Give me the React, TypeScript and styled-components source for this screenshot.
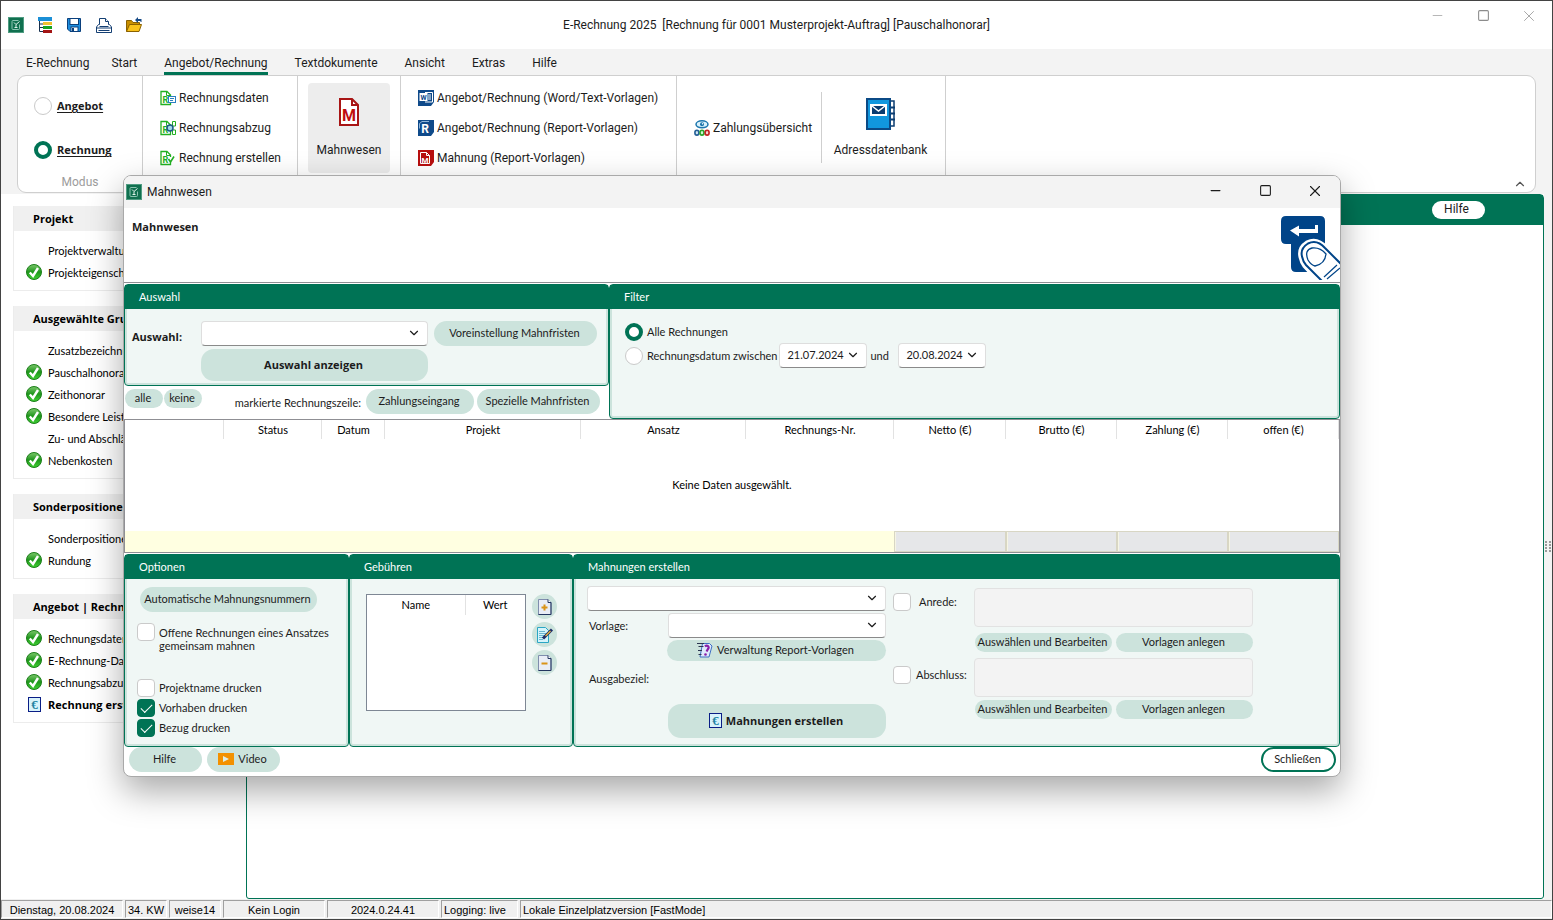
import React from "react";
import styled, { createGlobalStyle } from "styled-components";
import { ChevronDown, ChevronUp, Minus, Square, X } from "lucide-react";

const green = "#007355";
const mint = "#cce3dc";
const uiFont = 'Roboto, "Open Sans", sans-serif';
const strongFont = '"Open Sans", "Noto Sans", sans-serif';
const formFont = 'Lato, "Open Sans", sans-serif';

const GlobalStyle = createGlobalStyle`
  * { box-sizing: border-box; }
  body { margin: 0; background: #fff; }
  button, input, select, textarea { font: inherit; color: inherit; margin: 0; }
  h1, h2, h3, p { margin: 0; font: inherit; }
  svg { display: block; flex: none; }
`;

/* ---------- application frame ---------- */

const AppWindow = styled.div`
  position: relative;
  display: flex;
  flex-direction: column;
  min-height: 100vh;
  border: 1px solid #434343;
  background: #fff;
  color: #1c1c1c;
  font-family: ${uiFont};
  font-size: 12px;
  line-height: 16px;
  overflow: hidden;
`;

const TitleBar = styled.header`
  display: grid;
  grid-template-columns: 1fr auto 1fr;
  align-items: center;
  height: 48px;
  flex: none;
`;

const QuickAccess = styled.div`
  display: flex;
  gap: 14px;
  padding-left: 7px;
`;

const ToolButton = styled.button`
  display: flex;
  padding: 0;
  border: 0;
  background: none;
`;

const WindowButtons = styled.div<{ $muted?: boolean }>`
  display: flex;
  justify-content: flex-end;
  align-self: start;
  color: ${(p) => (p.$muted ? "#8c8c8c" : "#1c1c1c")};
`;

const WindowButton = styled.button<{ $width: number }>`
  display: flex;
  align-items: center;
  justify-content: center;
  width: ${(p) => p.$width}px;
  height: 29px;
  padding: 0;
  border: 0;
  background: none;
`;

const RibbonArea = styled.div`
  flex: none;
  padding: 0 16px 1px;
  background: #f3f3f3;
`;

const TabBar = styled.nav`
  display: flex;
  height: 26px;
  padding-left: 9px;
`;

const Tab = styled.button<{ $active?: boolean; $wide?: boolean }>`
  height: 26px;
  margin: 0 ${(p) => (p.$wide ? 22 : 27)}px 0 0;
  padding: 4px 0 0;
  border: 0;
  border-bottom: 3px solid ${(p) => (p.$active ? green : "transparent")};
  background: none;
  text-align: left;
`;

const Ribbon = styled.div`
  position: relative;
  display: flex;
  height: 118px;
  border: 1px solid #cfcfcf;
  border-radius: 9px;
  background: #fff;
`;

const RibbonGroup = styled.section<{ $width: number }>`
  display: flex;
  flex-direction: column;
  width: ${(p) => p.$width}px;
  border-right: 1px solid #cfcfcf;
`;

const ModeGroup = styled(RibbonGroup)`
  justify-content: space-between;
  padding-bottom: 2px;
`;

const ModeList = styled.div`
  display: flex;
  flex-direction: column;
  gap: 26px;
  padding: 21px 0 0 16px;
`;

const ModeCaption = styled.p`
  color: #9c9c9c;
  text-align: center;
`;

const ListGroup = styled(RibbonGroup)`
  padding: 7px 0 0 17px;
`;

const RibbonItem = styled.button`
  display: flex;
  align-items: center;
  gap: 3px;
  height: 30px;
  padding: 0;
  border: 0;
  background: none;
  white-space: nowrap;
`;

const TileGroup = styled(RibbonGroup)<{ $end?: number }>`
  padding: 7px ${(p) => p.$end ?? 10}px 0 10px;
`;

const Tile = styled.button<{ $selected?: boolean }>`
  display: flex;
  flex-direction: column;
  align-items: center;
  justify-content: space-between;
  height: 90px;
  padding: 14px 0 15px;
  border: 0;
  border-radius: 4px;
  background: ${(p) => (p.$selected ? "#ededed" : "none")};
`;

const OverviewGroup = styled(RibbonGroup)`
  flex-direction: row;
  padding: 16px 0 29px 17px;
  border: 0;
`;

const OverviewSlot = styled.div`
  display: flex;
  align-items: center;
  flex: 1;
  border-right: 1px solid #cfcfcf;
`;

const CollapseButton = styled.button`
  align-self: flex-end;
  display: flex;
  margin: 0 8px 1px auto;
  padding: 0;
  border: 0;
  background: none;
  color: #555;
`;

/* ---------- choice controls ---------- */

const Radio = styled.input.attrs({ type: "radio" })`
  appearance: none;
  flex: none;
  width: 18px;
  height: 18px;
  border: 1px solid #cacaca;
  border-radius: 50%;
  background: #fff;
  &:checked {
    border: 4px solid ${green};
  }
`;

const Check = styled.input.attrs({ type: "checkbox" })`
  appearance: none;
  flex: none;
  display: grid;
  place-items: center;
  width: 18px;
  height: 18px;
  border: 1px solid #cacaca;
  border-radius: 4px;
  background: #fff;
  &:checked {
    border-color: ${green};
    background: ${green};
  }
  &:checked::after {
    content: "";
    width: 10px;
    height: 5px;
    margin-top: -3px;
    border: solid #fff;
    border-width: 0 0 1px 1px;
    transform: rotate(-45deg);
  }
`;

const Choice = styled.label<{ $gap?: number; $top?: boolean }>`
  display: flex;
  align-items: ${(p) => (p.$top ? "flex-start" : "center")};
  gap: ${(p) => p.$gap ?? 4}px;
  white-space: nowrap;
`;

const ModeLabel = styled.span`
  font: 700 11px/16px ${strongFont};
  text-decoration: underline;
  text-underline-offset: 2px;
`;

/* ---------- body: sidebar and document area ---------- */

const Body = styled.main`
  display: flex;
  flex: 1;
`;

const Sidebar = styled.aside`
  display: flex;
  flex-direction: column;
  gap: 15px;
  flex: none;
  width: 245px;
  padding: 12px 12px 0;
  font-family: ${formFont};
  font-size: 11px;
  color: #000;
`;

const SideGroup = styled.section`
  padding-bottom: 6px;
  border: 1px solid #ececec;
  border-top: 0;
`;

const SideTitle = styled.h2`
  height: 25px;
  margin-bottom: 9px;
  padding: 5px 0 0 19px;
  background: #f0f0f0;
  font: 700 11px/16px ${strongFont};
`;

const SideItem = styled.a<{ $strong?: boolean }>`
  display: flex;
  align-items: center;
  gap: 6px;
  height: 22px;
  padding-left: 12px;
  color: inherit;
  text-decoration: none;
  white-space: nowrap;
  font-family: ${(p) => (p.$strong ? strongFont : "inherit")};
  font-weight: ${(p) => (p.$strong ? 700 : 400)};
`;

const IconSlot = styled.span`
  display: flex;
  justify-content: center;
  width: 16px;
  padding-bottom: 2px;
`;

const DocumentArea = styled.section`
  flex: 1;
  border: 1px solid ${green};
  border-radius: 4px 4px 3px 3px;
`;

const DocumentHeader = styled.div`
  display: flex;
  align-items: flex-start;
  justify-content: flex-end;
  height: 30px;
  padding: 6px 58px 0 0;
  background: ${green};
`;

const WhiteButton = styled.button`
  width: 53px;
  height: 18px;
  padding: 0 4px 2px 0;
  border: 0;
  border-radius: 9px;
  background: #fff;
  font-size: 12px;
  line-height: 16px;
`;

const RightRail = styled.div`
  display: flex;
  align-items: center;
  justify-content: center;
  width: 8px;
  background: #f3f3f3;
`;

const StatusBar = styled.footer`
  display: flex;
  gap: 2px;
  flex: none;
  height: 20px;
  padding: 1px 0;
  background: #f0f0f0;
  color: #000;
  font: 11px/18px "Liberation Sans", Arial, sans-serif;
`;

const StatusCell = styled.span<{ $width?: number; $left?: boolean }>`
  flex: ${(p) => (p.$width ? "none" : 1)};
  width: ${(p) => (p.$width ? p.$width + "px" : "auto")};
  padding: 0 2px;
  border: 1px solid;
  border-color: #a0a0a0 #fff #fff #a0a0a0;
  text-align: ${(p) => (p.$left ? "left" : "center")};
  white-space: nowrap;
`;

/* ---------- dialog ---------- */

const Dialog = styled.section`
  position: absolute;
  left: 122px;
  right: 211px;
  top: 174px;
  border: 1px solid #a9a9a9;
  border-radius: 8px;
  background: #fff;
  box-shadow: 0 14px 34px rgba(0, 0, 0, 0.34);
  overflow: hidden;
  font-family: ${formFont};
  font-size: 11px;
`;

const DialogBar = styled.header`
  display: flex;
  align-items: center;
  height: 32px;
  padding-left: 2px;
  background: #f3f3f3;
  font: 12px/16px ${uiFont};
`;

const DialogTitle = styled.h1`
  flex: 1;
  padding: 0 0 1px 5px;
`;

const DialogHead = styled.div`
  display: flex;
  justify-content: space-between;
  height: 75px;
  margin-bottom: 1px;
  padding: 8px 0 0 8px;
  border-bottom: 1px solid #8f8f94;
`;

const Strong = styled.strong`
  font: 700 11px/16px ${strongFont};
`;

const HeadTitle = styled(Strong)`
  padding-top: 3px;
`;

const UpperRow = styled.div`
  display: grid;
  grid-template-columns: 485px 1fr;
  height: 135px;
`;

const LowerRow = styled.div`
  display: grid;
  grid-template-columns: 225px 224px 1fr;
  height: 193px;
  margin-top: 1px;
`;

const Stack = styled.div`
  display: flex;
  flex-direction: column;
`;

const PanelBox = styled.section`
  display: flex;
  flex-direction: column;
  flex: 1;
  min-width: 0;
  border: 1px solid ${green};
  border-radius: 4px;
  background: #f0f7f5;
  box-shadow: inset 0 0 0 2px ${mint};
`;

const PanelTitle = styled.h2`
  flex: none;
  height: 24px;
  padding: 4px 0 0 14px;
  background: ${green};
  color: #fff;
  line-height: 16px;
`;

const Pill = styled.button<{ $width: number; $height?: number }>`
  display: flex;
  align-items: center;
  justify-content: center;
  gap: 4px;
  flex: none;
  width: ${(p) => p.$width}px;
  height: ${(p) => p.$height ?? 25}px;
  padding: 0 2px 1px 0;
  border: 0;
  border-radius: 13px;
  background: ${mint};
  line-height: 16px;
  white-space: nowrap;
`;

const OutlinePill = styled(Pill)`
  margin-left: auto;
  border: 2px solid ${green};
  background: #fff;
`;

const SelectWrap = styled.span<{ $width: number }>`
  position: relative;
  display: block;
  flex: none;
  width: ${(p) => p.$width}px;
  height: 25px;
  svg {
    position: absolute;
    right: 7px;
    top: 5px;
    pointer-events: none;
  }
`;

const SelectBox = styled.select`
  appearance: none;
  width: 100%;
  height: 100%;
  padding: 0 7px 1px;
  border: 1px solid #dedede;
  border-bottom-color: #8a8a8a;
  border-radius: 4px;
  background: #fff;
`;

function DropDown({ label, width, value = "" }: { label: string; width: number; value?: string }) {
  return (
    <SelectWrap $width={width}>
      <SelectBox aria-label={label} defaultValue={value}>
        <option value={value}>{value}</option>
      </SelectBox>
      <ChevronDown size={14} strokeWidth={2} />
    </SelectWrap>
  );
}

const ChoiceForm = styled.div`
  display: grid;
  grid-template-columns: 63px 227px 163px;
  gap: 3px 6px;
  flex: 1;
  padding: 12px 0 4px 7px;
  align-items: start;
`;

const ChoiceCaption = styled(Strong)`
  padding-top: 8px;
`;

const SecondRow = styled.div`
  grid-column: 2;
`;

const MarkRow = styled.div`
  display: flex;
  align-items: flex-start;
  gap: 1px;
  height: 33px;
  padding: 3px 0 0 1px;
`;

const MarkCaption = styled.span`
  flex: 1;
  padding: 6px 4px 0 0;
  text-align: right;
  white-space: nowrap;
`;

const MarkActions = styled.div`
  display: flex;
  gap: 3px;
  padding-right: 9px;
`;

const FilterForm = styled.div`
  display: flex;
  flex-direction: column;
  align-items: flex-start;
  gap: 2px;
  padding: 14px 0 0 15px;
`;

const FilterRow = styled.div`
  display: flex;
  align-items: center;
  gap: 2px;
`;

const AndWord = styled.span`
  width: 27px;
  padding-left: 1px;
`;

const InvoiceTable = styled.table`
  width: 100%;
  table-layout: fixed;
  border-collapse: separate;
  border-spacing: 0;
  border: 1px solid #8f8f94;
  color: #000;
  th,
  td {
    padding: 0;
    font-weight: 400;
    text-align: center;
  }
  thead th {
    height: 21px;
    padding-bottom: 1px;
    background: linear-gradient(#e2e2e2, #e2e2e2) right top / 1px 19px no-repeat;
  }
  tbody td {
    height: 90px;
    padding-bottom: 2px;
  }
  tfoot td {
    height: 21px;
    background: #ffffe1;
  }
`;

const SumCell = styled.td`
  && {
    background: #e6e7e9;
    border: 1px solid #d8d6c4;
    box-shadow: inset 1px 0 #f6f5e4;
  }
`;

const OptionForm = styled.div`
  display: flex;
  flex-direction: column;
  align-items: flex-start;
  gap: 2px;
  padding: 8px 0 0 12px;
`;

const OptionTop = styled.div`
  padding: 0 0 9px 3px;
`;

const TwoLine = styled.span`
  padding-top: 3px;
  line-height: 13px;
  white-space: pre-line;
`;

const OptionBreak = styled.div`
  height: 23px;
`;

const FeeForm = styled.div`
  display: flex;
  gap: 6px;
  padding: 15px 0 0 16px;
`;

const FeeBox = styled.div`
  width: 160px;
  height: 117px;
  border: 1px solid #7e8794;
  background: #fff;
`;

const FeeTable = styled.table`
  width: 100%;
  border-collapse: collapse;
  color: #000;
  th {
    height: 20px;
    padding: 0;
    font-weight: 400;
  }
  th:first-child {
    width: 98px;
    border-right: 1px solid #e2e2e2;
  }
`;

const RoundButtons = styled.div`
  display: flex;
  flex-direction: column;
  gap: 3px;
`;

const RoundButton = styled.button`
  display: grid;
  place-items: center;
  width: 25px;
  height: 25px;
  padding: 0;
  border: 0;
  border-radius: 50%;
  background: ${mint};
`;

const DunningForm = styled.div`
  display: flex;
  gap: 7px;
  padding: 7px 0 0 13px;
`;

const DunningLeft = styled.div`
  display: flex;
  flex-direction: column;
  gap: 2px;
  width: 299px;
`;

const FieldRow = styled.div`
  display: flex;
  align-items: center;
  justify-content: space-between;
  height: 25px;
  padding-left: 2px;
`;

const TargetRow = styled(FieldRow)`
  height: 39px;
  padding-bottom: 8px;
`;

const RightAligned = styled.div`
  display: flex;
  justify-content: flex-end;
`;

const DunningRight = styled.div`
  display: grid;
  grid-template-columns: 74px 279px;
  column-gap: 7px;
  align-content: start;
  align-items: start;
  padding-top: 2px;
`;

const BlockChoice = styled(Choice)<{ $down: number }>`
  padding-top: ${(p) => p.$down}px;
`;

const TextBox = styled.textarea`
  display: block;
  width: 100%;
  height: 39px;
  border: 1px solid #e2e2e2;
  border-radius: 4px;
  background: #f3f3f3;
  resize: none;
`;

const ButtonPair = styled.div<{ $top: number; $bottom: number }>`
  grid-column: 2;
  display: flex;
  justify-content: space-between;
  padding: ${(p) => p.$top}px 0 ${(p) => p.$bottom}px 1px;
`;

const DialogFooter = styled.footer`
  display: flex;
  gap: 5px;
  height: 29px;
  padding: 0 4px 0 5px;
`;

/* ---------- icons ---------- */

const AppIcon = () => (
  <svg width="16" height="16" viewBox="0 0 16 16">
    <rect width="16" height="16" fill="#10704f" />
    <rect x="0.5" y="0.5" width="15" height="15" fill="none" stroke="#4f9c82" />
    <path d="M10.500 3.500H5q-1 0-1 1v7q0 1 1 1h5.500q1 0 1-1V7.500" fill="none" stroke="#8cc4b1" />
    <path d="M6 5.500l2 2 3.500-3M8 7.500v3M6.500 10.500h3" fill="none" stroke="#dff2ea" />
  </svg>
);

const TreeIcon = () => (
  <svg width="14" height="16" viewBox="1 0 14 16">
    <rect x="1" width="14" height="4" fill="#1b8fd6" />
    <path d="M2.500 4v10.500H6M2.500 7H6M2.500 10.500H6" fill="none" stroke="#16304f" />
    <rect x="6" y="5" width="9" height="3" fill="#f2c230" />
    <rect x="6" y="9" width="9" height="3" fill="#17a321" />
    <rect x="6" y="13" width="9" height="3" fill="#a31515" />
  </svg>
);

const SaveIcon = () => (
  <svg width="16" height="16" viewBox="0 0 16 16">
    <path d="M1.500 1.500h13v13H4L1.500 12z" fill="#1d8ede" stroke="#0a3f7c" />
    <rect x="4" y="1.500" width="8.500" height="6" fill="#fff" stroke="#0a3f7c" />
    <rect x="5" y="10" width="7" height="4.500" fill="#fff" stroke="#0a3f7c" />
    <rect x="6" y="11" width="2" height="3" fill="#0a3f7c" />
  </svg>
);

const PrintIcon = () => (
  <svg width="16" height="16" viewBox="0 0 16 16" fill="#fff" stroke="#143f73">
    <path d="M3.500 9.500v-8H9.500l3 3v5" />
    <path d="M9.500 1.500v3h3" />
    <path d="M3.500 7.500h-1L.5 10v5.500h15V10l-2-2.500h-1M.5 11h15M3.500 9.500h9" />
    <path d="M2.500 13.500h11" />
  </svg>
);

const FolderIcon = () => (
  <svg width="16" height="16" viewBox="0 0 16 16">
    <path d="M.5 14.500v-11h5l1.500 2h6.500v3" fill="#c98f00" stroke="#8a6100" />
    <path d="M.5 14.500l3-7h12l-2.500 7z" fill="#f9c21a" stroke="#8a6100" />
    <path d="M9 3l3-3v2h3.500v3h-1V4H12v2z" fill="#164a86" />
  </svg>
);

const ReceiptIcon = ({ kind }: { kind: "data" | "deduct" | "create" }) => (
  <svg width="16" height="16" viewBox="0 0 16 16">
    <path d="M1 1.500h6l3.500 3.500v9.500H1z" fill="#fff" stroke="#22b022" strokeWidth="1.300" />
    <path d="M6.500 1.500v4h4" fill="none" stroke="#22b022" />
    <text x="2.500" y="12.800" fontFamily="Roboto" fontSize="9" fontWeight="700" fill="#22b022">R</text>
    {kind === "data" && (
      <>
        <rect x="8.500" y="6.500" width="7" height="6" fill="#fff" stroke="#2a7fc0" />
        <path d="M10 8.500h4M10 10.500h3" stroke="#2a7fc0" />
      </>
    )}
    {kind === "deduct" && (
      <>
        <path d="M12.500 6V1.500h3V6H13M12.500 10v4.500h3V10H13" fill="none" stroke="#22b022" />
        <circle cx="10" cy="8" r="3" fill="#9fd8ea" stroke="#1c5a86" strokeWidth="1.500" />
      </>
    )}
    {kind === "create" && (
      <>
        <path d="M9 7h3v5H9z" fill="#fff" />
        <path d="M8.500 9l2 3 3.500-5.500" fill="none" stroke="#22b022" strokeWidth="1.600" />
      </>
    )}
  </svg>
);

const DunningIcon = () => (
  <svg width="22" height="30" viewBox="0 0 22 30">
    <path d="M2 2h12l6 6v20H2z" fill="#fff" stroke="#a81515" strokeWidth="2" />
    <path d="M14 2v6h6" fill="none" stroke="#a81515" strokeWidth="2" />
    <text x="11" y="24" textAnchor="middle" fontFamily="Roboto" fontSize="16" fontWeight="700" fill="#c00d0d">M</text>
  </svg>
);

const TemplateIcon = ({ color, letter }: { color: string; letter: "W" | "R" | "M" }) => (
  <svg width="16" height="16" viewBox="0 0 16 16">
    <path d="M0 0h16v12l-3 4H0z" fill={color} />
    {letter === "W" && (
      <>
        <path d="M7 2.500h7.500v9.500H7" fill="none" stroke="#fff" />
        <path d="M10 5h3M10 7h3M10 9h3" stroke="#fff" />
        <rect x="1.500" y="3" width="8" height="8" fill="#fff" />
      </>
    )}
    {letter === "M" && <path d="M2.500 13.500v-11h6l3 3v8zM8.500 2.500v3h3" fill="none" stroke="#fff" />}
    {letter === "R" && <path d="M1.500 3.500L4 1.500h7M1.500 3.500v5" fill="none" stroke="#8fb4d8" />}
    <text
      x={letter === "W" ? 5.5 : 7}
      y={letter === "W" ? 9.5 : 12.5}
      textAnchor="middle"
      fontFamily="Roboto"
      fontSize={letter === "W" ? 7 : letter === "M" ? 8 : 12}
      fontWeight="700"
      fill={letter === "W" ? color : "#fff"}
    >
      {letter}
    </text>
  </svg>
);

const PaymentIcon = () => (
  <svg width="16" height="16" viewBox="0 0 16 16" fill="none">
    <ellipse cx="8" cy="4.300" rx="6" ry="3.500" fill="#d9f1fb" stroke="#1c76ad" strokeWidth="1.500" />
    <circle cx="8" cy="4.300" r="2" fill="#1c76ad" />
    <circle cx="8.500" cy="3.700" r="0.700" fill="#fff" />
    <ellipse cx="2.900" cy="12.700" rx="2" ry="2.400" fill="#cfe3f2" stroke="#245f96" strokeWidth="1.600" />
    <ellipse cx="8" cy="12.700" rx="2" ry="2.400" fill="#d2f3d2" stroke="#2ba52b" strokeWidth="1.600" />
    <ellipse cx="13.100" cy="12.700" rx="2" ry="2.400" fill="#f6d5d5" stroke="#c32222" strokeWidth="1.600" />
  </svg>
);

const AddressIcon = () => (
  <svg width="30" height="34" viewBox="0 0 30 34">
    <rect x="24" y="4" width="4" height="25" fill="#fff" stroke="#0b3c70" strokeWidth="1.500" />
    <path d="M23 10.500h6M23 16.500h6M23 22.500h6" stroke="#0b3c70" strokeWidth="2" />
    <rect x="1" y="2" width="23" height="30" fill="#1197de" stroke="#0b4a86" strokeWidth="2" />
    <rect x="4" y="7" width="17" height="12" fill="#fff" />
    <rect x="6" y="9" width="13" height="8" fill="#0b3c70" />
    <path d="M6 9l6.500 5L19 9" fill="none" stroke="#fff" strokeWidth="1.500" />
  </svg>
);

const DoneIcon = () => (
  <svg width="16" height="16" viewBox="0 0 16 16">
    <defs>
      <linearGradient id="done" x1="0" y1="0" x2="0" y2="1">
        <stop offset="0" stopColor="#7cc86c" />
        <stop offset="0.5" stopColor="#1f961c" />
        <stop offset="1" stopColor="#3fd033" />
      </linearGradient>
    </defs>
    <circle cx="8" cy="8" r="7.500" fill="url(#done)" stroke="#1c7f1a" />
    <path d="M3.800 8.500l3.200 3.500 5-8" fill="none" stroke="#fff" strokeWidth="2.400" />
  </svg>
);

const EuroIcon = () => (
  <svg width="13" height="15" viewBox="0 0 13 15">
    <rect x="0.500" y="0.500" width="12" height="14" fill="#d8f3fb" stroke="#0a1e86" />
    <text x="6.500" y="12" textAnchor="middle" fontFamily="Liberation Serif" fontSize="13" fontWeight="700" fill="#2384a3">€</text>
  </svg>
);

const SheetIcon = ({ sign }: { sign: "plus" | "minus" }) => (
  <svg width="14" height="16" viewBox="0 0 14 16">
    <path d="M.5.5h9.500l3 3v12H.5z" fill="#e9edf6" stroke="#7f8dad" />
    <path d="M13 3.500v12H.5" fill="none" stroke="#22355f" />
    <path d="M10 .5v3h3" fill="#fff" stroke="#22355f" />
    <path d={sign === "plus" ? "M3.500 8.500h6M6.500 5.500v6" : "M3.500 8.500h6"} stroke="#d99318" strokeWidth="2" />
  </svg>
);

const EditSheetIcon = () => (
  <svg width="16" height="16" viewBox="0 0 16 16">
    <path d="M.5.500h8l3 3v12H.5z" fill="#d5f4fb" stroke="#2aa6c4" />
    <path d="M2 4.500h6M2 6.500h7M2 8.500h6M2 10.500h4M2 12.500h4" stroke="#6bb6d0" />
    <path d="M6 11.500L15 2.500" stroke="#1c2b66" strokeWidth="3" />
    <path d="M8.500 9l5-5" stroke="#e8b53d" strokeWidth="1.200" />
  </svg>
);

const ReportIcon = () => (
  <svg width="16" height="16" viewBox="0 0 16 16">
    <path d="M5.500 1.500h7l2.500 2.500-3 11H3z" fill="#dfeafc" stroke="#3f6fc4" />
    <path d="M0 1.500h7M1.500 4.500h5M1 8.500h4M1.500 12.500h3" stroke="#2b3550" />
    <path d="M8 4.500c2-2 5 0 3 2.500L9.500 9.500" fill="none" stroke="#8a1fa8" strokeWidth="2.200" />
    <circle cx="8.500" cy="12.500" r="1.300" fill="#8a1fa8" />
  </svg>
);

const VideoIcon = () => (
  <svg width="16" height="12" viewBox="0 0 16 12">
    <rect width="16" height="12" fill="#f39100" />
    <path d="M5 3l6 3-6 3z" fill="#dfeee6" />
  </svg>
);

const EnterKeyIcon = () => (
  <svg width="59" height="64" viewBox="0 0 59 64">
    <path d="M5 0h34q5 0 5 5v45q0 6-6 6H15q-5 0-5-5V28H5q-5 0-5-5V5q0-5 5-5z" fill="#004488" />
    <path d="M9 14.500l9-5v3.500h16V9h3v8H18v3.500z" fill="#fff" />
    <path d="M64 53L45 32Q36 22 26 27q-8 5-6 14 1 5 4 9l16 17z" fill="#fff" stroke="#fff" strokeWidth="5" />
    <path d="M64 52L44 32Q36 23 27 27.500q-8 5-6 13 1 5 4 8.500l18 18" fill="#fff" stroke="#004488" strokeWidth="2" />
    <path d="M27 44q-4-10 4-12 8-1 14 6-1 10-11 12-4-1-7-6z" fill="#fff" stroke="#004488" strokeWidth="1.300" />
    <path d="M43 61l13-12M46 63l13-11" stroke="#004488" strokeWidth="1.200" />
  </svg>
);

const Grip = () => (
  <svg width="6" height="12" viewBox="0 0 6 12" fill="#9a9a9a">
    {[0, 3, 6, 9].map((y) => (
      <g key={y}>
        <rect x="0" y={y} width="2" height="2" />
        <rect x="4" y={y} width="2" height="2" />
      </g>
    ))}
  </svg>
);

/* ---------- data ---------- */

type Mark = "none" | "done" | "euro";

const sideGroups: { title: string; items: [string, Mark][] }[] = [
  { title: "Projekt", items: [["Projektverwaltung", "none"], ["Projekteigenschaften", "done"]] },
  {
    title: "Ausgewählte Grundlagen",
    items: [
      ["Zusatzbezeichnungen", "none"],
      ["Pauschalhonorar", "done"],
      ["Zeithonorar", "done"],
      ["Besondere Leistungen", "done"],
      ["Zu- und Abschläge", "none"],
      ["Nebenkosten", "done"],
    ],
  },
  { title: "Sonderpositionen", items: [["Sonderpositionen", "none"], ["Rundung", "done"]] },
  {
    title: "Angebot | Rechnung",
    items: [
      ["Rechnungsdaten", "done"],
      ["E-Rechnung-Daten", "done"],
      ["Rechnungsabzug", "done"],
      ["Rechnung erstellen", "euro"],
    ],
  },
];

const tableColumns: [string, number | undefined][] = [
  ["", 99],
  ["Status", 98],
  ["Datum", 63],
  ["Projekt", undefined],
  ["Ansatz", 165],
  ["Rechnungs-Nr.", 148],
  ["Netto (€)", 112],
  ["Brutto (€)", 111],
  ["Zahlung (€)", 111],
  ["offen (€)", 111],
];

function WindowControls({ width, muted }: { width: number; muted?: boolean }) {
  return (
    <WindowButtons $muted={muted}>
      <WindowButton $width={width} aria-label="Minimieren"><Minus size={15} strokeWidth={muted ? 1 : 2} /></WindowButton>
      <WindowButton $width={width} aria-label="Maximieren"><Square size={13} strokeWidth={2} /></WindowButton>
      <WindowButton $width={width} aria-label="Fenster schließen"><X size={18} strokeWidth={muted ? 1 : 1.5} /></WindowButton>
    </WindowButtons>
  );
}

function Panel({ title, children }: { title: string; children: React.ReactNode }) {
  return (
    <PanelBox>
      <PanelTitle>{title}</PanelTitle>
      {children}
    </PanelBox>
  );
}

function TextBlock({ label, last }: { label: string; last?: boolean }) {
  return (
    <>
      <BlockChoice $gap={last ? 5 : 8} $down={last ? 8 : 5}>
        <Check />
        {label}
      </BlockChoice>
      <TextBox aria-label={label} disabled />
      <ButtonPair $top={last ? 3 : 6} $bottom={last ? 0 : 6}>
        <Pill $width={137} $height={19}>Auswählen und Bearbeiten</Pill>
        <Pill $width={137} $height={19}>Vorlagen anlegen</Pill>
      </ButtonPair>
    </>
  );
}

function DunningDialog() {
  return (
    <Dialog role="dialog" aria-label="Mahnwesen">
      <DialogBar>
        <AppIcon />
        <DialogTitle>Mahnwesen</DialogTitle>
        <WindowControls width={50} />
      </DialogBar>
      <DialogHead>
        <HeadTitle>Mahnwesen</HeadTitle>
        <EnterKeyIcon />
      </DialogHead>

      <UpperRow>
        <Stack>
          <Panel title="Auswahl">
            <ChoiceForm>
              <ChoiceCaption>Auswahl:</ChoiceCaption>
              <DropDown label="Auswahl" width={227} />
              <Pill $width={163}>Voreinstellung Mahnfristen</Pill>
              <SecondRow>
                <Pill $width={227} $height={32}><Strong>Auswahl anzeigen</Strong></Pill>
              </SecondRow>
            </ChoiceForm>
          </Panel>
          <MarkRow>
            <Pill $width={38} $height={19}>alle</Pill>
            <Pill $width={38} $height={19}>keine</Pill>
            <MarkCaption>markierte Rechnungszeile:</MarkCaption>
            <MarkActions>
              <Pill $width={108}>Zahlungseingang</Pill>
              <Pill $width={123}>Spezielle Mahnfristen</Pill>
            </MarkActions>
          </MarkRow>
        </Stack>
        <Panel title="Filter">
          <FilterForm>
            <Choice><Radio name="filter" defaultChecked />Alle Rechnungen</Choice>
            <FilterRow>
              <Choice><Radio name="filter" />Rechnungsdatum zwischen</Choice>
              <DropDown label="Datum von" width={88} value="21.07.2024" />
              <AndWord>und</AndWord>
              <DropDown label="Datum bis" width={88} value="20.08.2024" />
            </FilterRow>
          </FilterForm>
        </Panel>
      </UpperRow>

      <InvoiceTable>
        <colgroup>
          {tableColumns.map(([name, width]) => <col key={name} width={width} />)}
        </colgroup>
        <thead>
          <tr>{tableColumns.map(([name]) => <th key={name} scope="col">{name}</th>)}</tr>
        </thead>
        <tbody>
          <tr><td colSpan={10}>Keine Daten ausgewählt.</td></tr>
        </tbody>
        <tfoot>
          <tr>
            <td colSpan={6} />
            <SumCell /><SumCell /><SumCell /><SumCell />
          </tr>
        </tfoot>
      </InvoiceTable>

      <LowerRow>
        <Panel title="Optionen">
          <OptionForm>
            <OptionTop><Pill $width={177}>Automatische Mahnungsnummern</Pill></OptionTop>
            <Choice $top><Check /><TwoLine>{"Offene Rechnungen eines Ansatzes\ngemeinsam mahnen"}</TwoLine></Choice>
            <OptionBreak />
            <Choice><Check />Projektname drucken</Choice>
            <Choice><Check defaultChecked />Vorhaben drucken</Choice>
            <Choice><Check defaultChecked />Bezug drucken</Choice>
          </OptionForm>
        </Panel>
        <Panel title="Gebühren">
          <FeeForm>
            <FeeBox>
              <FeeTable>
                <thead><tr><th scope="col">Name</th><th scope="col">Wert</th></tr></thead>
              </FeeTable>
            </FeeBox>
            <RoundButtons>
              <RoundButton aria-label="Gebühr hinzufügen"><SheetIcon sign="plus" /></RoundButton>
              <RoundButton aria-label="Gebühr bearbeiten"><EditSheetIcon /></RoundButton>
              <RoundButton aria-label="Gebühr löschen"><SheetIcon sign="minus" /></RoundButton>
            </RoundButtons>
          </FeeForm>
        </Panel>
        <Panel title="Mahnungen erstellen">
          <DunningForm>
            <DunningLeft>
              <DropDown label="Mahnung" width={299} />
              <FieldRow>
                Vorlage:
                <DropDown label="Vorlage" width={218} />
              </FieldRow>
              <RightAligned>
                <Pill $width={219} $height={21}><ReportIcon />Verwaltung Report-Vorlagen</Pill>
              </RightAligned>
              <TargetRow>Ausgabeziel:</TargetRow>
              <RightAligned>
                <Pill $width={218} $height={34}><EuroIcon /><Strong>Mahnungen erstellen</Strong></Pill>
              </RightAligned>
            </DunningLeft>
            <DunningRight>
              <TextBlock label="Anrede:" />
              <TextBlock label="Abschluss:" last />
            </DunningRight>
          </DunningForm>
        </Panel>
      </LowerRow>

      <DialogFooter>
        <Pill $width={73}>Hilfe</Pill>
        <Pill $width={73}><VideoIcon />Video</Pill>
        <OutlinePill $width={75}>Schließen</OutlinePill>
      </DialogFooter>
    </Dialog>
  );
}

export default function App() {
  return (
    <>
      <GlobalStyle />
      <AppWindow>
        <TitleBar>
          <QuickAccess>
            <ToolButton aria-label="Programm"><AppIcon /></ToolButton>
            <ToolButton aria-label="Struktur"><TreeIcon /></ToolButton>
            <ToolButton aria-label="Speichern"><SaveIcon /></ToolButton>
            <ToolButton aria-label="Drucken"><PrintIcon /></ToolButton>
            <ToolButton aria-label="Öffnen"><FolderIcon /></ToolButton>
          </QuickAccess>
          <span>E-Rechnung 2025&nbsp; [Rechnung für 0001 Musterprojekt-Auftrag] [Pauschalhonorar]</span>
          <WindowControls width={46} muted />
        </TitleBar>

        <RibbonArea>
          <TabBar>
            <Tab $wide>E-Rechnung</Tab>
            <Tab>Start</Tab>
            <Tab $active>Angebot/Rechnung</Tab>
            <Tab>Textdokumente</Tab>
            <Tab>Ansicht</Tab>
            <Tab>Extras</Tab>
            <Tab>Hilfe</Tab>
          </TabBar>
          <Ribbon>
            <ModeGroup $width={125}>
              <ModeList>
                <Choice $gap={5}><Radio name="mode" /><ModeLabel>Angebot</ModeLabel></Choice>
                <Choice $gap={5}><Radio name="mode" defaultChecked /><ModeLabel>Rechnung</ModeLabel></Choice>
              </ModeList>
              <ModeCaption>Modus</ModeCaption>
            </ModeGroup>
            <ListGroup $width={155}>
              <RibbonItem><ReceiptIcon kind="data" />Rechnungsdaten</RibbonItem>
              <RibbonItem><ReceiptIcon kind="deduct" />Rechnungsabzug</RibbonItem>
              <RibbonItem><ReceiptIcon kind="create" />Rechnung erstellen</RibbonItem>
            </ListGroup>
            <TileGroup $width={103}>
              <Tile $selected><DunningIcon />Mahnwesen</Tile>
            </TileGroup>
            <ListGroup $width={276}>
              <RibbonItem><TemplateIcon color="#0f4a8a" letter="W" />Angebot/Rechnung (Word/Text-Vorlagen)</RibbonItem>
              <RibbonItem><TemplateIcon color="#0f4a8a" letter="R" />Angebot/Rechnung (Report-Vorlagen)</RibbonItem>
              <RibbonItem><TemplateIcon color="#b80f0f" letter="M" />Mahnung (Report-Vorlagen)</RibbonItem>
            </ListGroup>
            <OverviewGroup $width={145}>
              <OverviewSlot><RibbonItem><PaymentIcon />Zahlungsübersicht</RibbonItem></OverviewSlot>
            </OverviewGroup>
            <TileGroup $width={124} $end={16}>
              <Tile><AddressIcon />Adressdatenbank</Tile>
            </TileGroup>
            <CollapseButton aria-label="Menüband reduzieren"><ChevronUp size={14} /></CollapseButton>
          </Ribbon>
        </RibbonArea>

        <Body>
          <Sidebar>
            {sideGroups.map((group) => (
              <SideGroup key={group.title}>
                <SideTitle>{group.title}</SideTitle>
                {group.items.map(([name, mark]) => (
                  <SideItem key={name} href="#" $strong={mark === "euro"}>
                    <IconSlot>
                      {mark === "done" && <DoneIcon />}
                      {mark === "euro" && <EuroIcon />}
                    </IconSlot>
                    {name}
                  </SideItem>
                ))}
              </SideGroup>
            ))}
          </Sidebar>
          <DocumentArea>
            <DocumentHeader><WhiteButton>Hilfe</WhiteButton></DocumentHeader>
          </DocumentArea>
          <RightRail><Grip /></RightRail>
        </Body>

        <StatusBar>
          <StatusCell $width={122}>Dienstag, 20.08.2024</StatusCell>
          <StatusCell $width={42}>34. KW</StatusCell>
          <StatusCell $width={52}>weise14</StatusCell>
          <StatusCell $width={102}>Kein Login</StatusCell>
          <StatusCell $width={112}>2024.0.24.41</StatusCell>
          <StatusCell $width={77} $left>Logging: live</StatusCell>
          <StatusCell $left>Lokale Einzelplatzversion [FastMode]</StatusCell>
        </StatusBar>

        <DunningDialog />
      </AppWindow>
    </>
  );
}
